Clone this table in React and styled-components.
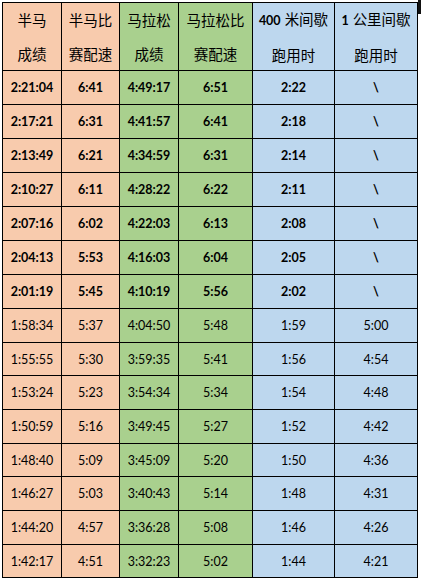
import styled, { createGlobalStyle } from 'styled-components'

const GlobalStyle = createGlobalStyle`
  html, body { margin: 0; padding: 0; background: #fff; }
`

const COLORS = { peach: '#F8CBAD', green: '#A9D08E', blue: '#BDD7EE' }
const COL_BG = ['peach', 'peach', 'green', 'green', 'blue', 'blue']

const ROW_HEIGHTS = [67, 33, 33, 33, 33, 33, 33, 33, 33, 32, 33, 33, 32, 33, 33, 32]

const Page = styled.div`
  display: flex; align-items: flex-start;
  padding-left: 2px;
`

const Sheet = styled.div`
  margin-top: 2px;
  display: grid;
  grid-template-columns: 58px 57px 58px 73px 81px 82px;
  grid-template-rows: ${ROW_HEIGHTS.map((h) => `${h}px`).join(' ')};
  gap: 1px; padding: 1px;
  background: #000;
`

const EdgeMark = styled.div`width: 3px; height: 14px; background: #111;`

const Cell = styled.div`
  background: ${({ $tone }) => COLORS[$tone]};
  display: flex; align-items: center; justify-content: center;
  color: #000;
  font-family: Lato, "Liberation Sans", sans-serif;
  font-size: 12.5px;
  font-weight: ${({ $bold }) => ($bold ? 700 : 400)};
`

const HeadCell = styled.div`
  background: ${({ $tone }) => COLORS[$tone]};
  display: flex; flex-direction: column; align-items: center; justify-content: center;
  color: #000;
  font-family: "Noto Sans CJK SC", sans-serif;
  font-size: 14.5px;
  line-height: 34px;
  white-space: nowrap;
`

const Num = styled.span`
  font-family: Lato, "Liberation Sans", sans-serif;
  font-weight: 700; font-size: 12.5px;
  margin-right: 4px;
`

const HEADERS = [
  ['半马', '成绩'],
  ['半马比', '赛配速'],
  ['马拉松', '成绩'],
  ['马拉松比', '赛配速'],
  [['400', '米间歇'], '跑用时'],
  [['1', '公里间歇'], '跑用时'],
]

const ROWS = [
  ['2:21:04', '6:41', '4:49:17', '6:51', '2:22', '\\'],
  ['2:17:21', '6:31', '4:41:57', '6:41', '2:18', '\\'],
  ['2:13:49', '6:21', '4:34:59', '6:31', '2:14', '\\'],
  ['2:10:27', '6:11', '4:28:22', '6:22', '2:11', '\\'],
  ['2:07:16', '6:02', '4:22:03', '6:13', '2:08', '\\'],
  ['2:04:13', '5:53', '4:16:03', '6:04', '2:05', '\\'],
  ['2:01:19', '5:45', '4:10:19', '5:56', '2:02', '\\'],
  ['1:58:34', '5:37', '4:04:50', '5:48', '1:59', '5:00'],
  ['1:55:55', '5:30', '3:59:35', '5:41', '1:56', '4:54'],
  ['1:53:24', '5:23', '3:54:34', '5:34', '1:54', '4:48'],
  ['1:50:59', '5:16', '3:49:45', '5:27', '1:52', '4:42'],
  ['1:48:40', '5:09', '3:45:09', '5:20', '1:50', '4:36'],
  ['1:46:27', '5:03', '3:40:43', '5:14', '1:48', '4:31'],
  ['1:44:20', '4:57', '3:36:28', '5:08', '1:46', '4:26'],
  ['1:42:17', '4:51', '3:32:23', '5:02', '1:44', '4:21'],
]

const App = () => (
  <>
    <GlobalStyle />
    <Page>
      <Sheet>
        {HEADERS.map(([top, bottom], i) => (
          <HeadCell key={`h${i}`} $tone={COL_BG[i]}>
            <span>
              {Array.isArray(top) ? <><Num>{top[0]}</Num>{top[1]}</> : top}
            </span>
            <span>{bottom}</span>
          </HeadCell>
        ))}
        {ROWS.map((row, r) =>
          row.map((v, c) => (
            <Cell key={`${r}-${c}`} $tone={COL_BG[c]} $bold={r < 7}>{v}</Cell>
          ))
        )}
      </Sheet>
      <EdgeMark />
    </Page>
  </>
)

export default App
